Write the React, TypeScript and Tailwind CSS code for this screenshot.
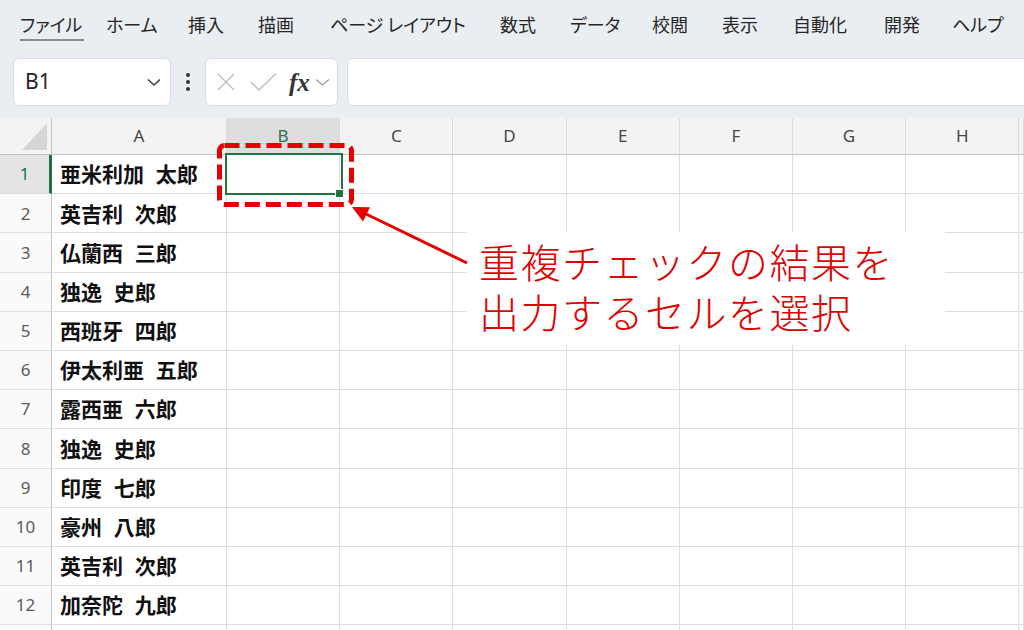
import { ReactNode } from 'react';

const tabs = [
  { label: 'ファイル', w: 'w-[86px]', active: true },
  { label: 'ホーム', w: 'w-[82px]' },
  { label: '挿入', w: 'w-[70px]' },
  { label: '描画', w: 'w-[72px]' },
  { label: 'ページ レイアウト', w: 'w-[170px]' },
  { label: '数式', w: 'w-[70px]' },
  { label: 'データ', w: 'w-[82px]' },
  { label: '校閲', w: 'w-[70px]' },
  { label: '表示', w: 'w-[71px]' },
  { label: '自動化', w: 'w-[91px]' },
  { label: '開発', w: 'w-[68px]' },
  { label: 'ヘルプ', w: 'w-[60px]' },
];

const names = [
  '亜米利加 太郎',
  '英吉利 次郎',
  '仏蘭西 三郎',
  '独逸 史郎',
  '西班牙 四郎',
  '伊太利亜 五郎',
  '露西亜 六郎',
  '独逸 史郎',
  '印度 七郎',
  '豪州 八郎',
  '英吉利 次郎',
  '加奈陀 九郎',
];

const cols = ['A', 'B', 'C', 'D', 'E', 'F', 'G', 'H', ''];

const gridCols = 'grid grid-cols-[52px_175px_repeat(7,113.2px)_1fr]';

function Box({ className, children }: { className: string; children?: ReactNode }) {
  return (
    <div className={`h-[48px] bg-white border border-[#d9dde1] rounded-[6px] flex items-center ${className}`}>
      {children}
    </div>
  );
}

function Row({ num, name }: { num?: number; name?: string }) {
  return (
    <div className={`${gridCols} h-[39.2px]`}>
      <div
        className={`flex items-center justify-center text-[17px] font-['Noto_Sans',sans-serif] border-b border-[#dedede] ${
          num === 1
            ? 'bg-[#e4e4e4] text-[#217346] border-r-[3px] border-r-[#217346]'
            : 'bg-[#fafafa] text-[#5a5a5a] border-r border-r-[#c4c4c4]'
        }`}
      >
        {num}
      </div>
      <div className="flex items-center pl-[8px] border-r border-b border-[#dedede] text-[21px] font-bold text-[#111] [word-spacing:7px] whitespace-nowrap">
        {name}
      </div>
      {cols.slice(1).map((_, i) => (
        <div key={i} className="border-r border-b border-[#dedede]" />
      ))}
    </div>
  );
}

export default function App() {
  return (
    <div className="relative w-[1024px] h-[630px] overflow-hidden bg-white font-['Noto_Sans_CJK_JP',sans-serif]">
      {/* ribbon tabs + formula bar */}
      <div className="bg-[#e9eef2] h-[118px] flex flex-col">
        <div className="h-[47px] flex items-center pl-[20px] text-[18px] text-[#262626] [font-feature-settings:'palt']">
          {tabs.map((t) => (
            <div key={t.label} className={`${t.w} shrink-0 h-full flex items-center`}>
              <span className="relative leading-none">
                {t.label}
                {t.active && <span className="absolute left-0 -right-[2px] -bottom-[8px] h-[2px] bg-[#8c8c8c]" />}
              </span>
            </div>
          ))}
        </div>
        <div className="flex items-center pl-[13px] mt-[11px]">
          <Box className="w-[158px] pl-[11px] pr-[8px] justify-between">
            <span className="font-['Noto_Sans',sans-serif] text-[21px] text-[#242424]">B1</span>
            <svg width="16" height="10" viewBox="0 0 16 10">
              <path d="M2 2.5 L8 8 L14 2.5" fill="none" stroke="#3c3c3c" strokeWidth="1.6" />
            </svg>
          </Box>
          <div className="w-[34px] flex flex-col items-center gap-[3px]">
            <span className="w-[4px] h-[4px] rounded-full bg-[#333]" />
            <span className="w-[4px] h-[4px] rounded-full bg-[#333]" />
            <span className="w-[4px] h-[4px] rounded-full bg-[#333]" />
          </div>
          <Box className="w-[133px] pl-[10px]">
            <svg width="20" height="20" viewBox="0 0 20 20">
              <path d="M2 2 L18 18 M18 2 L2 18" stroke="#bdbdbd" strokeWidth="1.4" />
            </svg>
            <svg className="ml-[14px]" width="27" height="20" viewBox="0 0 27 20">
              <path d="M1 10 L9 18 L26 1.5" fill="none" stroke="#bdbdbd" strokeWidth="1.4" />
            </svg>
            <span className="ml-[12px] font-['Liberation_Serif',serif] italic font-bold text-[25px] text-[#333] leading-none">
              fx
            </span>
            <svg className="ml-[5px]" width="15" height="8" viewBox="0 0 15 8">
              <path d="M1 1.5 L7.5 7 L14 1.5" fill="none" stroke="#9a9a9a" strokeWidth="1.2" />
            </svg>
          </Box>
          <Box className="ml-[9px] flex-1 mr-[-12px]" />
        </div>
      </div>

      {/* column headers */}
      <div className={`${gridCols} h-[37px] bg-[#f3f3f3] border-b border-[#c4c4c4] text-[17px] text-[#454545] font-['Noto_Sans',sans-serif]`}>
        <div className="relative border-r border-[#c4c4c4]">
          <svg className="absolute left-[22px] top-[5px]" width="26" height="27" viewBox="0 0 26 27">
            <polygon points="25,0 25,27 0,27" fill="#d6d6d6" />
          </svg>
        </div>
        {cols.map((c, i) => (
          <div
            key={i}
            className={`flex items-center justify-center border-r border-[#dadada] ${
              c === 'B' ? 'bg-[#dedede] text-[#2f6f4e]' : ''
            }`}
          >
            {c}
          </div>
        ))}
      </div>

      {/* rows */}
      {names.map((n, r) => (
        <Row key={r} num={r + 1} name={n} />
      ))}
      <Row />

      {/* active cell */}
      <div className="absolute left-[225px] top-[153px] w-[118px] h-[42px] border-2 border-[#217346]" />
      <div className="absolute left-[335px] top-[189px] w-[8px] h-[8px] bg-[#217346] border-l border-t border-white" />

      {/* annotation box */}
      <div className="absolute left-[467px] top-[232px] w-[478px] h-[113px] bg-white pl-[12px] pt-[4px] text-[40px] leading-[50px] tracking-[1.5px] text-[#e00000] font-light whitespace-nowrap">
        <div>重複チェックの結果を</div>
        <div>出力するセルを選択</div>
      </div>

      {/* dashed highlight + arrow */}
      <svg className="absolute left-0 top-0 pointer-events-none" width="1024" height="630" viewBox="0 0 1024 630">
        <rect
          x="219.5"
          y="145.5"
          width="132"
          height="59"
          rx="5"
          fill="none"
          stroke="#e60000"
          strokeWidth="5"
          strokeDasharray="15 6"
        />
        <line x1="467" y1="263" x2="365" y2="213.5" stroke="#e60000" strokeWidth="3" />
        <polygon points="352,207 370,207.2 363,221.5" fill="#e60000" />
      </svg>
    </div>
  );
}
